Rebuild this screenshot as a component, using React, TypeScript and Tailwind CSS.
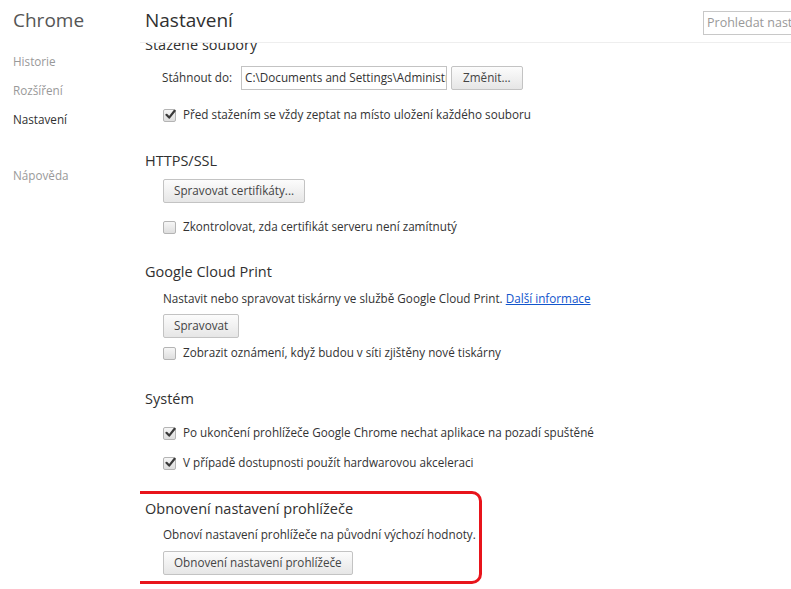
import React from "react";

const font = { fontFamily: '"Open Sans", "DejaVu Sans", sans-serif' };

function Checkbox({ checked }: { checked?: boolean }) {
  return (
    <span className="relative flex h-[13px] w-[13px] shrink-0 items-center justify-center rounded-[2px] border border-[#b4b4b4] bg-gradient-to-b from-[#f6f6f6] to-[#dedede]">
      {checked && (
        <svg width="11" height="11" viewBox="0 0 11 11" className="absolute -top-[1px] left-[1px]">
          <path d="M1.5 5.8 L4.2 8.6 L9.6 1.8" fill="none" stroke="#3a3a3a" strokeWidth="2.2" strokeLinecap="round" strokeLinejoin="round" />
        </svg>
      )}
    </span>
  );
}

function CheckRow({ checked, label, className }: { checked?: boolean; label: string; className?: string }) {
  return (
    <div className={`flex h-5 items-center gap-[7px] pl-[18px] ${className ?? ""}`}>
      <Checkbox checked={checked} />
      <span>{label}</span>
    </div>
  );
}

function Button({ label, className }: { label: string; className?: string }) {
  return (
    <div className={`ml-[18px] flex h-6 w-fit items-center rounded-[2px] border border-[#c3c3c3] bg-gradient-to-b from-[#fcfcfc] to-[#e6e6e6] px-[10px] text-[#444] ${className ?? ""}`}>
      {label}
    </div>
  );
}

function Heading({ label, className }: { label: string; className?: string }) {
  return <div className={`flex h-5 items-center text-[14.5px] text-[#303030] ${className ?? ""}`}>{label}</div>;
}

export default function App() {
  return (
    <div className="flex h-[589px] w-[791px] overflow-hidden bg-white text-[11.7px] text-[#333]" style={font}>
      {/* Sidebar */}
      <div className="w-[140px] shrink-0 pl-[13px]">
        <div className="mt-[8px] h-6 text-[19px] leading-6 text-[#555]">Chrome</div>
        <div className="mt-[20px] flex h-5 items-center text-[#999]">Historie</div>
        <div className="mt-[9px] flex h-5 items-center text-[#999]">Rozšíření</div>
        <div className="mt-[9px] flex h-5 items-center text-[#303030]">Nastavení</div>
        <div className="mt-[36px] flex h-5 items-center text-[#999]">Nápověda</div>
      </div>

      {/* Main */}
      <div className="flex min-w-0 flex-1 flex-col">
        <div className="flex h-[43px] shrink-0 items-start justify-between border-b border-[#eee] pl-[5px]">
          <div className="mt-[8px] h-6 text-[19px] leading-6 text-[#303030]">Nastavení</div>
          <div className="-mr-[22px] mt-[11px] flex h-6 w-[110px] items-center overflow-hidden whitespace-nowrap border border-[#c8c8c8] pl-[3px] text-[12.5px] text-[#999]">
            Prohledat nastavení
          </div>
        </div>

        <div className="min-h-0 flex-1 overflow-hidden pl-[5px]">
          <Heading label="Stažené soubory" className="-mt-[8px]" />
          <div className="mt-[11px] flex h-6 items-center pl-[17px]">
            <span className="mr-[9px]">Stáhnout do:</span>
            <div className="flex h-6 w-[206px] items-center overflow-hidden whitespace-nowrap border border-[#c3c3c3] pl-[3px]">
              C:\Documents and Settings\Administrator\Dokumenty\Stažené soubory
            </div>
            <div className="ml-[4px] flex h-6 items-center rounded-[2px] border border-[#c3c3c3] bg-gradient-to-b from-[#fcfcfc] to-[#e6e6e6] px-[11px] text-[#444]">
              Změnit...
            </div>
          </div>
          <CheckRow checked label="Před stažením se vždy zeptat na místo uložení každého souboru" className="mt-[15px]" />

          <Heading label="HTTPS/SSL" className="mt-[26px]" />
          <Button label="Spravovat certifikáty..." className="mt-[8px]" />
          <CheckRow label="Zkontrolovat, zda certifikát serveru není zamítnutý" className="mt-[14px]" />

          <Heading label="Google Cloud Print" className="mt-[25px]" />
          <div className="mt-[7px] flex h-5 items-center pl-[18px]">
            Nastavit nebo spravovat tiskárny ve službě Google Cloud Print.&nbsp;
            <span className="text-[#15c] underline">Další informace</span>
          </div>
          <Button label="Spravovat" className="mt-[5px]" />
          <CheckRow label="Zobrazit oznámení, když budou v síti zjištěny nové tiskárny" className="mt-[5px]" />

          <Heading label="Systém" className="mt-[26px]" />
          <CheckRow checked label="Po ukončení prohlížeče Google Chrome nechat aplikace na pozadí spuštěné" className="mt-[14px]" />
          <CheckRow checked label="V případě dostupnosti použít hardwarovou akceleraci" className="mt-[10px]" />

          <div className="relative mt-[26px]">
            <div className="pointer-events-none absolute -left-[32px] -top-[8px] h-[93px] w-[369px] rounded-[10px] border-[3px] border-[#e8141b]" />
            <Heading label="Obnovení nastavení prohlížeče" />
            <div className="mt-[6px] flex h-5 items-center pl-[18px]">
              Obnoví nastavení prohlížeče na původní výchozí hodnoty.
            </div>
            <Button label="Obnovení nastavení prohlížeče" className="mt-[6px]" />
          </div>
        </div>
      </div>
    </div>
  );
}
